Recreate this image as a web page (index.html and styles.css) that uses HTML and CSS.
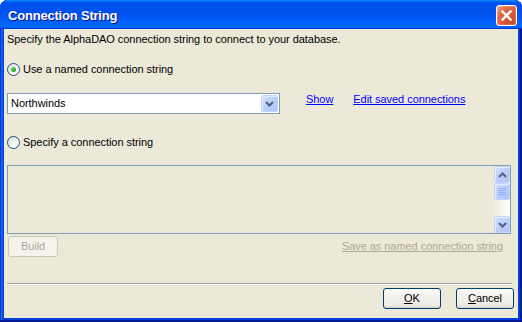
FILE: index.html
```html
<!DOCTYPE html>
<html>
<head>
<meta charset="utf-8">
<link rel="stylesheet" href="styles.css">
</head>
<body>
<div class="window">
  <div class="titlebar">
    <span class="title">Connection String</span>
    <span class="close">
      <svg width="19" height="19" viewBox="0 0 19 19"><path d="M5.5 5.5 L13.5 13.5 M13.5 5.5 L5.5 13.5" stroke="#fff" stroke-width="2.4" stroke-linecap="square" fill="none"/></svg>
    </span>
  </div>
  <div class="client">
    <div class="desc">Specify the AlphaDAO connection string to connect to your database.</div>
    <div class="radio-row r1"><span class="radio checked"></span><span class="label">Use a named connection string</span></div>
    <div class="combo-row">
      <div class="combo">
        <span class="combo-text">Northwinds</span>
        <span class="xpbtn combo-btn">
          <svg width="9" height="6" viewBox="0 0 9 6"><path d="M1 1 L4.5 4.5 L8 1" stroke="#4d6185" stroke-width="2" fill="none"/></svg>
        </span>
      </div>
      <span class="link show">Show</span>
      <span class="link edit">Edit saved connections</span>
    </div>
    <div class="radio-row r2"><span class="radio"></span><span class="label">Specify a connection string</span></div>
    <div class="textarea">
      <div class="scrollbar">
        <span class="xpbtn sb-btn">
          <svg width="9" height="6" viewBox="0 0 9 6"><path d="M1 5 L4.5 1.5 L8 5" stroke="#4d6185" stroke-width="2" fill="none"/></svg>
        </span>
        <span class="xpbtn sb-thumb">
          <svg width="8" height="8" viewBox="0 0 8 8"><path d="M0 0.5 H8 M0 2.5 H8 M0 4.5 H8 M0 6.5 H8" stroke="#8cb0f8" stroke-width="1" fill="none"/></svg>
        </span>
        <span class="sb-track"></span>
        <span class="xpbtn sb-btn">
          <svg width="9" height="6" viewBox="0 0 9 6"><path d="M1 1 L4.5 4.5 L8 1" stroke="#4d6185" stroke-width="2" fill="none"/></svg>
        </span>
      </div>
    </div>
    <div class="build-row">
      <span class="btn btn-disabled build">Build</span>
      <span class="link link-disabled save">Save as named connection string</span>
    </div>
    <div class="separator"></div>
    <div class="footer">
      <span class="btn"><u>O</u>K</span>
      <span class="btn"><u>C</u>ancel</span>
    </div>
  </div>
</div>
</body>
</html>
```

FILE: styles.css
```css
html, body {
  margin: 0;
  padding: 0;
  width: 522px;
  height: 322px;
  overflow: hidden;
  background: #fff;
}

.window {
  width: 522px;
  height: 322px;
  box-sizing: border-box;
  display: flex;
  flex-direction: column;
  background: #0843dc;
  border-radius: 8px 8px 0 0;
  box-shadow: inset -1px -1px #00138c, inset 1px 1px #0831d9, inset -2px -2px #001ea0, inset 2px 2px #166aee, inset -3px -3px #003bda, inset 3px 3px #0855dd;
  font-family: "Liberation Sans", Arial, sans-serif;
  font-size: 11px;
  color: #000;
}

.titlebar {
  height: 29px;
  flex: none;
  display: flex;
  align-items: flex-start;
  justify-content: space-between;
  border-radius: 8px 8px 0 0;
  background: linear-gradient(180deg, #0997ff, #0053ee 8%, #0050ee 40%, #0066ff 88%, #0066ff 93%, #005bff 95%, #003dd7 96%, #003dd7);
  padding: 0 5px 0 8px;
  box-sizing: border-box;
}

.title {
  font-family: "Liberation Sans", Arial, sans-serif;
  font-weight: bold;
  font-size: 13px;
  color: #fff;
  padding-top: 3px;
  line-height: 26px;
  text-shadow: 1px 1px #0f1089;
  letter-spacing: -0.2px;
}

.close {
  margin-top: 5px;
  width: 21px;
  height: 21px;
  box-sizing: border-box;
  border: 1px solid #fff;
  border-radius: 3px;
  display: flex;
  align-items: center;
  justify-content: center;
  background: radial-gradient(circle at 85% 85%, #c94a25 0%, #d95b34 45%, #e26e4a 70%, #f0a088 95%);
  box-shadow: inset 0 0 0 1px rgba(255,255,255,0.15);
}

.client {
  flex: 1;
  margin: 0 4px 4px 4px;
  background: #ece9d8;
  display: flex;
  flex-direction: column;
  padding: 4px 4px 0 3px;
  letter-spacing: -0.05px;
}

.desc {
  line-height: 13px;
}

.radio-row {
  display: flex;
  align-items: center;
  height: 13px;
  line-height: 13px;
}

.r1 { margin-top: 17px; }
.r2 { margin-top: 22px; }

.radio {
  width: 13px;
  height: 13px;
  box-sizing: border-box;
  border: 1px solid #1c5180;
  border-radius: 50%;
  background: linear-gradient(135deg, #dcdcd7, #ffffff 80%);
  margin-right: 3px;
  position: relative;
  flex: none;
}

.radio.checked::after {
  content: "";
  position: absolute;
  left: 3px;
  top: 3px;
  width: 5px;
  height: 5px;
  border-radius: 50%;
  background: radial-gradient(circle at 35% 35%, #5fe05c, #21a121 70%, #138a13);
}

.combo-row {
  margin-top: 17px;
  display: flex;
  align-items: flex-start;
  height: 21px;
}

.combo {
  width: 273px;
  height: 21px;
  box-sizing: border-box;
  border: 1px solid #7f9db9;
  background: #fff;
  display: flex;
  align-items: center;
  justify-content: space-between;
  padding: 1px;
}

.combo-text {
  padding-left: 2px;
  line-height: 13px;
}

.xpbtn {
  box-sizing: border-box;
  border: 1px solid #c3d3fd;
  border-radius: 2px;
  background: linear-gradient(135deg, #d4e0fd 0%, #bccefa 50%, #b0c4f7 100%);
  display: flex;
  align-items: center;
  justify-content: center;
  box-shadow: inset 1px 1px #e6eefc;
}

.combo-btn {
  width: 17px;
  height: 17px;
}

.link {
  color: #0000ff;
  text-decoration: underline;
  line-height: 13px;
}

.show { margin-left: 26px; }
.edit { margin-left: 20px; }

.textarea {
  margin-top: 16px;
  margin-right: 3px;
  height: 69px;
  box-sizing: border-box;
  border: 1px solid #7f9db9;
  background: #ece9d8;
  display: flex;
  justify-content: flex-end;
}

.scrollbar {
  width: 16px;
  display: flex;
  flex-direction: column;
  background: linear-gradient(90deg, #eeede5, #f8f7f3 60%, #fdfdfd);
}

.sb-btn {
  width: 16px;
  height: 17px;
  flex: none;
}

.sb-thumb {
  width: 16px;
  height: 17px;
  flex: none;
}

.sb-track {
  flex: 1;
}

.build-row {
  margin-top: 2px;
  height: 21px;
  display: flex;
  align-items: center;
  justify-content: space-between;
}

.btn {
  width: 58px;
  height: 21px;
  box-sizing: border-box;
  border: 1px solid #003c74;
  border-radius: 3px;
  background: linear-gradient(180deg, #ffffff, #f4f3ee 30%, #ecebe6 86%, #d6d0c5);
  display: flex;
  align-items: center;
  justify-content: center;
  line-height: 13px;
}

.btn-disabled {
  border-color: #c9c7ba;
  background: #f5f4ea;
  color: #aca899;
}

.build {
  width: 50px;
  margin-left: 1px;
}

.link-disabled {
  color: #aca899;
}

.save {
  margin-right: 11px;
}

.separator {
  margin-top: 26px;
  margin-right: 2px;
  height: 0;
  border-top: 1px solid #aca899;
  border-bottom: 1px solid #fff;
}

.footer {
  margin-top: 3px;
  display: flex;
  justify-content: flex-end;
  gap: 15px;
}

.footer u {
  text-decoration: underline;
}
```
